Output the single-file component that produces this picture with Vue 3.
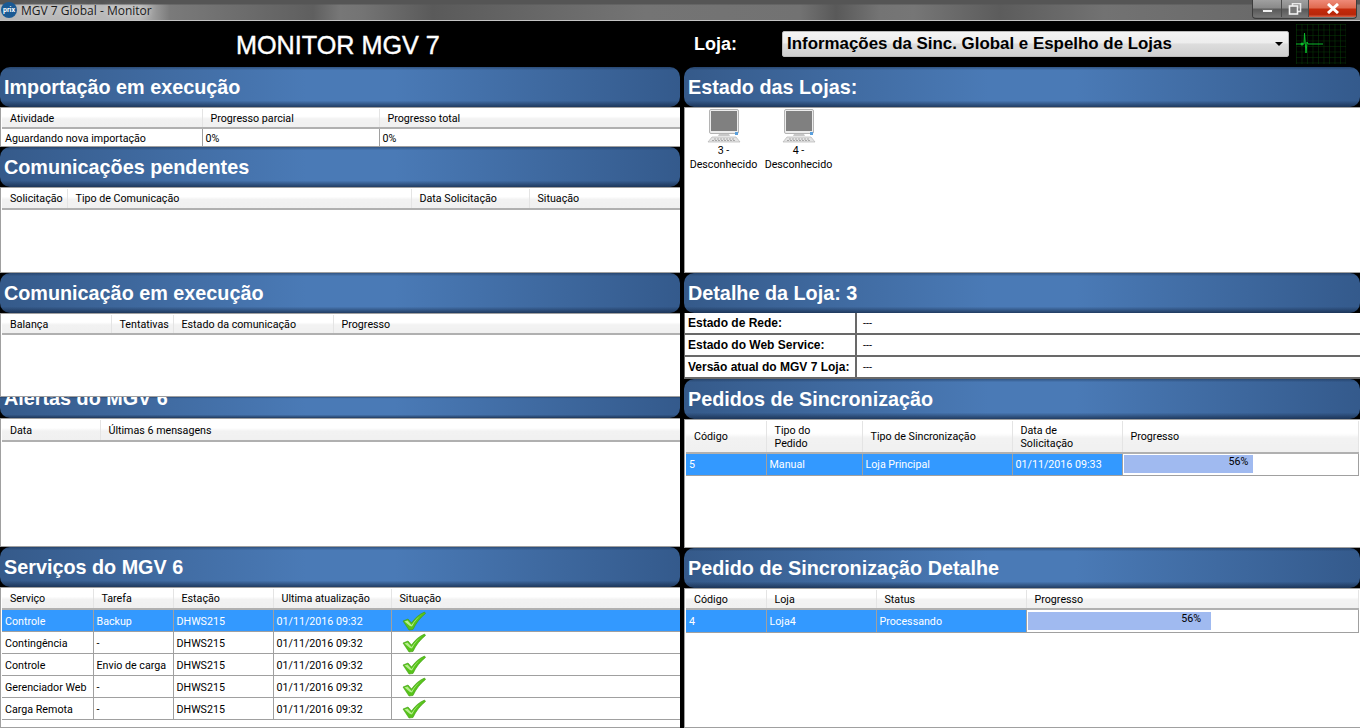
<script setup>
const leftPanels = [
  {
    title: 'Importação em execução',
    bodyHeight: 40,
    headHeight: 19,
    columns: [{ label: 'Atividade', width: 200 }, { label: 'Progresso parcial', width: 177 }, { label: 'Progresso total', width: 301 }],
    rows: [['Aguardando nova importação', '0%', '0%']],
    rowHeight: 19
  },
  {
    title: 'Comunicações pendentes',
    bodyHeight: 86,
    headHeight: 20,
    columns: [{ label: 'Solicitação', width: 65 }, { label: 'Tipo de Comunicação', width: 344 }, { label: 'Data Solicitação', width: 118 }, { label: 'Situação', width: 151 }],
    rows: []
  },
  {
    title: 'Comunicação em execução',
    bodyHeight: 84,
    headHeight: 19,
    columns: [{ label: 'Balança', width: 109 }, { label: 'Tentativas', width: 62 }, { label: 'Estado da comunicação', width: 160 }, { label: 'Progresso', width: 347 }],
    rows: []
  },
  {
    title: 'Alertas do MGV 6',
    clipped: true,
    bodyHeight: 129,
    headHeight: 21,
    columns: [{ label: 'Data', width: 98 }, { label: 'Últimas 6 mensagens', width: 580 }],
    rows: []
  },
  {
    title: 'Serviços do MGV 6',
    bodyHeight: 141,
    headHeight: 20,
    columns: [{ label: 'Serviço', width: 91 }, { label: 'Tarefa', width: 80 }, { label: 'Estação', width: 100 }, { label: 'Ultima atualização', width: 118 }, { label: 'Situação', width: 289 }],
    rows: [
      ['Controle', 'Backup', 'DHWS215', '01/11/2016 09:32', 'ok'],
      ['Contingência', '-', 'DHWS215', '01/11/2016 09:32', 'ok'],
      ['Controle', 'Envio de carga', 'DHWS215', '01/11/2016 09:32', 'ok'],
      ['Gerenciador Web', '-', 'DHWS215', '01/11/2016 09:32', 'ok'],
      ['Carga Remota', '-', 'DHWS215', '01/11/2016 09:32', 'ok']
    ],
    selected: 0,
    rowHeight: 22
  }
]

const stores = ['3 -', '4 -']

const details = [
  ['Estado de Rede:', '---'],
  ['Estado do Web Service:', '---'],
  ['Versão atual do MGV 7 Loja:', '---']
]

const orders = {
  title: 'Pedidos de Sincronização',
  bodyHeight: 129,
  headHeight: 32,
  tall: true,
  columns: [{ label: 'Código', width: 80 }, { label: 'Tipo do Pedido', width: 96 }, { label: 'Tipo de Sincronização', width: 150 }, { label: 'Data de Solicitação', width: 110 }, { label: 'Progresso', width: 236 }],
  rows: [['5', 'Manual', 'Loja Principal', '01/11/2016 09:33', 56]],
  selected: 0,
  rowHeight: 22
}

const orderDetail = {
  title: 'Pedido de Sincronização Detalhe',
  bodyHeight: 140,
  headHeight: 19,
  columns: [{ label: 'Código', width: 80 }, { label: 'Loja', width: 110 }, { label: 'Status', width: 150 }, { label: 'Progresso', width: 332 }],
  rows: [['4', 'Loja4', 'Processando', 56]],
  selected: 0,
  rowHeight: 23
}
</script>

<template>
  <div class="window">
    <div class="titlebar">
      <div class="logo">prix</div>
      <span class="caption">MGV 7 Global - Monitor</span>
      <div class="controls">
        <div class="btn min"><span></span></div>
        <div class="btn restore">
          <svg width="14" height="12" viewBox="0 0 14 12"><rect x="4.5" y="0.5" width="8" height="8" fill="none" stroke="#e8e8e8" stroke-width="1.6"/><rect x="1.5" y="3" width="8" height="8" fill="#777" stroke="#f2f2f2" stroke-width="1.6"/></svg>
        </div>
        <div class="btn close">
          <svg width="14" height="11" viewBox="0 0 14 11"><path d="M2 1 L12 10 M12 1 L2 10" stroke="#fff" stroke-width="3"/></svg>
        </div>
      </div>
    </div>

    <div class="topbar">
      <h1>MONITOR MGV 7</h1>
      <label>Loja:</label>
      <div class="select">
        <span>Informações da Sinc. Global e Espelho de Lojas</span>
        <i class="arrow"></i>
      </div>
      <svg class="pulse" width="50" height="40" viewBox="0 0 50 40">
        <defs>
          <pattern id="ecg-grid" width="5.5" height="5.5" patternUnits="userSpaceOnUse">
            <path d="M5.5 0 H0 V5.5" fill="none" stroke="#063c06" stroke-width="1"/>
          </pattern>
        </defs>
        <rect width="50" height="40" fill="url(#ecg-grid)"/>
        <path d="M0 20 H8 L8.5 9 L10 29 L11 18 L12 20 H27" fill="none" stroke="#0bbd2a" stroke-width="1"/>
        <circle cx="6" cy="20" r="1.5" fill="#0bbd2a"/>
      </svg>
    </div>

    <div class="columns">
      <div class="column">
        <section v-for="panel in leftPanels" :key="panel.title">
          <div :class="['panel-head', { clipped: panel.clipped }]"><h2>{{ panel.title }}</h2></div>
          <div class="panel-body" :style="{ height: panel.bodyHeight + 'px' }">
            <table>
              <colgroup><col v-for="c in panel.columns" :key="c.label" :style="{ width: c.width + 'px' }"></colgroup>
              <thead>
                <tr :style="{ height: panel.headHeight + 'px' }"><th v-for="c in panel.columns" :key="c.label">{{ c.label }}</th></tr>
              </thead>
              <tbody>
                <tr v-for="(row, i) in panel.rows" :key="i" :class="{ selected: panel.selected === i }" :style="{ height: panel.rowHeight + 'px' }">
                  <td v-for="(cell, j) in row" :key="j">
                    <svg v-if="cell === 'ok'" class="check" width="24" height="20" viewBox="0 0 24 20">
                      <path d="M1 10 L6 8 L9.5 12 C13 7 17 3.5 22.5 1 L23.5 2.5 C18 7 14 12 11 18.5 L7 19 Z" fill="#57c41a" stroke="#3f9a12" stroke-width="0.6"/>
                      <path d="M2.5 10.5 L5.5 9.5 L9.5 14 C13 9 17 5 21 2.5 C16 6 12.5 10.5 10 15.5 L8 15 Z" fill="#b6ee8e"/>
                    </svg>
                    <template v-else>{{ cell }}</template>
                  </td>
                </tr>
              </tbody>
            </table>
          </div>
        </section>
      </div>

      <div class="column right">
        <section>
          <div class="panel-head"><h2>Estado das Lojas:</h2></div>
          <div class="panel-body stores">
            <div v-for="s in stores" :key="s" class="store">
              <svg width="34" height="34" viewBox="0 0 34 34">
                <rect x="2.5" y="0.5" width="29" height="24" rx="1.5" fill="#ececec" stroke="#b4b4b4"/>
                <rect x="4" y="2" width="26" height="20" fill="#808080"/>
                <path d="M12 25 H22 L23 27 H11 Z" fill="#c8c8c8"/>
                <path d="M5 28 H29 L33 33 H1 Z" fill="#e4e4e4" stroke="#b4b4b4" stroke-width="0.7"/>
                <path d="M7 30 H27 M5 31.5 H29" stroke="#a8a8a8" stroke-dasharray="2 1"/>
                <rect x="28" y="23" width="3" height="3" fill="#5aa0dd"/>
              </svg>
              <span>{{ s }}</span>
              <span>Desconhecido</span>
            </div>
          </div>
        </section>

        <section>
          <div class="panel-head"><h2>Detalhe da Loja: 3</h2></div>
          <div class="detail">
            <div v-for="d in details" :key="d[0]" class="detail-row">
              <b>{{ d[0] }}</b>
              <span>{{ d[1] }}</span>
            </div>
          </div>
        </section>

        <section v-for="panel in [orders, orderDetail]" :key="panel.title">
          <div class="panel-head"><h2>{{ panel.title }}</h2></div>
          <div class="panel-body" :style="{ height: panel.bodyHeight + 'px' }">
            <table :class="{ tall: panel.tall }">
              <colgroup><col v-for="c in panel.columns" :key="c.label" :style="{ width: c.width + 'px' }"></colgroup>
              <thead>
                <tr :style="{ height: panel.headHeight + 'px' }"><th v-for="c in panel.columns" :key="c.label">{{ c.label }}</th></tr>
              </thead>
              <tbody>
                <tr v-for="(row, i) in panel.rows" :key="i" :class="{ selected: panel.selected === i }" :style="{ height: panel.rowHeight + 'px' }">
                  <td v-for="(cell, j) in row" :key="j" :class="{ 'bar-cell': typeof cell === 'number' }">
                    <div v-if="typeof cell === 'number'" class="bar" :style="{ width: cell + '%' }">{{ cell }}%</div>
                    <template v-else>{{ cell }}</template>
                  </td>
                </tr>
              </tbody>
            </table>
          </div>
        </section>
      </div>
    </div>
  </div>
</template>

<style>
html, body {
  margin: 0;
  background: #000;
}
</style>

<style scoped>
.window {
  width: 1360px;
  height: 728px;
  overflow: hidden;
  background: #000;
  font-family: Roboto, "Liberation Sans", sans-serif;
  font-size: 10.7px;
  color: #000;
}

.titlebar {
  height: 20px;
  border-bottom: 1px solid #c4c4c4;
  display: flex;
  align-items: center;
  position: relative;
  background:
    linear-gradient(180deg, #555 0, #555 4px, rgba(85, 85, 85, 0) 5px),
    linear-gradient(90deg, #b8b8b8 0, #b8b8b8 140px, #7a7a7a 170px, #5f5f5f 313px, #777 340px, #747474 362px, #5a5a5a 433px, #6a6a6a 560px, #747474 645px, #727272 800px, #595959 836px, #747474 880px, #767676 914px, #5c5c5c 1000px, #727272 1105px, #6a6a6a 1254px, #7e7e7e 1360px);
}

.logo {
  width: 16px;
  height: 16px;
  margin-left: 1px;
  border-radius: 50%;
  background: #1a5a94;
  color: #fff;
  font-size: 7px;
  font-weight: 700;
  line-height: 16px;
  text-align: center;
}

.caption {
  margin-left: 4px;
  font-family: "Open Sans", "Liberation Sans", sans-serif;
  font-size: 12px;
  color: #1a1a1a;
  text-shadow: 0 0 6px rgba(255, 255, 255, 0.8);
}

.controls {
  position: absolute;
  top: 0;
  right: 3px;
  height: 18px;
  display: flex;
  border: 1px solid #3c3c3c;
  border-top: none;
  border-radius: 0 0 4px 4px;
  overflow: hidden;
}

.btn {
  display: flex;
  align-items: center;
  justify-content: center;
  height: 17px;
  box-sizing: border-box;
  border-right: 1px solid #4a4a4a;
  background: linear-gradient(180deg, #a0a0a0 0, #8a8a8a 45%, #5a5a5a 55%, #747474 100%);
}

.min {
  width: 29px;
}

.min span {
  width: 11px;
  height: 4px;
  margin-top: 5px;
  background: #f0f0f0;
  border: 1px solid #666;
  box-sizing: border-box;
}

.restore {
  width: 27px;
}

.close {
  width: 47px;
  border-right: none;
  background: linear-gradient(180deg, #ee8a78 0, #e06a50 45%, #c42a0c 55%, #b8260a 85%, #d8644a 100%);
}

.topbar {
  height: 46px;
  display: flex;
  align-items: center;
  color: #fff;
  font-family: "Liberation Sans", Arial, sans-serif;
}

.topbar h1 {
  width: 458px;
  margin: 2px 0 0 236px;
  flex: none;
  font-size: 25.2px;
  font-weight: 400;
  -webkit-text-stroke: 0.4px #fff;
  line-height: 44px;
}

.topbar label {
  width: 88px;
  font-size: 18px;
  font-weight: 700;
  flex: none;
}

.select {
  width: 507px;
  height: 26px;
  box-sizing: border-box;
  flex: none;
  display: flex;
  align-items: center;
  justify-content: space-between;
  padding: 0 5px 0 4px;
  border: 1px solid #bbb;
  border-radius: 2px;
  background: linear-gradient(180deg, #f4f4f4 0, #ededed 45%, #dddddd 50%, #cfcfcf 100%);
  color: #000;
  font-size: 16.9px;
  font-weight: 700;
}

.arrow {
  width: 0;
  height: 0;
  border-left: 4px solid transparent;
  border-right: 4px solid transparent;
  border-top: 4px solid #000;
}

.pulse {
  flex: none;
  margin-left: 7px;
}

.columns {
  display: flex;
  gap: 4px;
}

.column {
  width: 680px;
  flex: none;
}

.column.right {
  width: 676px;
}

.panel-head {
  height: 40px;
  box-sizing: border-box;
  border-radius: 10px;
  background:
    linear-gradient(180deg, rgba(20, 40, 70, 0.45) 0, rgba(20, 40, 70, 0) 8%, rgba(20, 40, 70, 0) 84%, rgba(20, 40, 70, 0.75) 100%),
    linear-gradient(90deg, #355a8a 0, #4a7ab6 45%, #4a7ab6 58%, #345a8c 100%);
  overflow: hidden;
}

.panel-head h2 {
  margin: 0 0 0 4px;
  height: 40px;
  line-height: 40px;
  color: #fff;
  font-family: "Liberation Sans", Arial, sans-serif;
  font-size: 19.8px;
  font-weight: 700;
}

.panel-head.clipped {
  height: 21px;
  border-radius: 0 0 10px 10px;
}

.panel-head.clipped h2 {
  margin-top: -19px;
}

.panel-body {
  background: #fff;
  box-sizing: border-box;
  overflow: hidden;
  border-top: 1px solid #a0a0a0;
  border-left: 1px solid #a0a0a0;
  border-bottom: 1px solid #a0a0a0;
}

table {
  border-collapse: collapse;
  table-layout: fixed;
  width: 1px;
  margin-left: 1px;
  margin-top: 1px;
}

th {
  padding: 0 0 0 8px;
  box-sizing: border-box;
  text-align: left;
  font-weight: 400;
  background: linear-gradient(180deg, #fff 0, #fff 40%, #f2f2f2 55%, #f0f0f0 100%);
  border-right: 1px solid #e4e4e4;
  border-bottom: 2px solid #b0b0b0;
}

.tall th {
  padding-right: 25px;
  line-height: 13px;
}

td {
  padding: 1px 0 0 3px;
  border: 1px solid #a0a0a0;
  border-top: none;
  border-left: none;
  white-space: nowrap;
  overflow: hidden;
}

.selected td {
  background: #3399ff;
  color: #fff;
}

.selected td.bar-cell,
td.bar-cell {
  background: #fff;
  padding: 1px 2px 1px 1px;
  color: #000;
}

.bar {
  height: 18px;
  line-height: 14px;
  box-sizing: border-box;
  padding-right: 10px;
  text-align: right;
  background: #a0baf0;
}

.tall .bar {
  padding-right: 5px;
}

.check {
  display: block;
  margin-left: 7px;
}

.stores {
  height: 166px;
  display: flex;
  align-items: flex-start;
  padding-left: 1px;
}

.store {
  width: 75px;
  display: flex;
  flex-direction: column;
  align-items: center;
  white-space: nowrap;
  line-height: 14px;
}

.store svg {
  margin: 1px 0 1px;
}

.detail {
  height: 66px;
  box-sizing: border-box;
  background: #fff;
  border-left: 1px solid #696969;
}

.detail-row {
  height: 22px;
  box-sizing: border-box;
  display: flex;
  align-items: center;
  border-bottom: 2px solid #696969;
}

.detail-row b {
  width: 172px;
  height: 20px;
  line-height: 20px;
  padding-left: 3px;
  box-sizing: border-box;
  border-right: 2px solid #696969;
  flex: none;
  font-family: "Liberation Sans", Arial, sans-serif;
  font-size: 12px;
  white-space: nowrap;
}

.detail-row span {
  padding-left: 6px;
}
</style>
